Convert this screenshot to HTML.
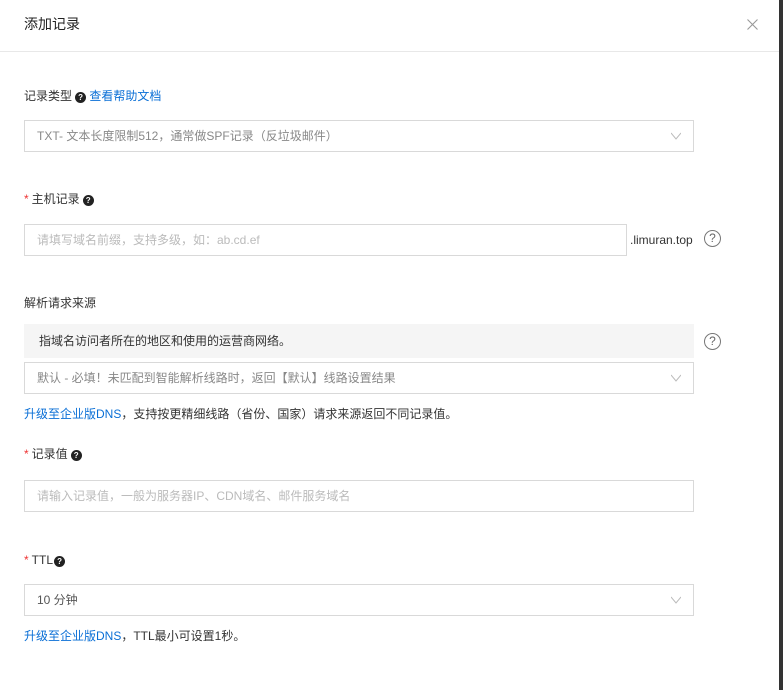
<!DOCTYPE html>
<html><head><meta charset="utf-8"><style>
*{margin:0;padding:0;box-sizing:border-box}
body{width:783px;height:690px;background:#fff;position:relative;overflow:hidden;font-family:"Liberation Sans","Noto Sans CJK SC",sans-serif;font-size:12px;color:#333}
.a{position:absolute;white-space:nowrap}
.lbl{line-height:16px}
.box{position:absolute;border:1px solid #d9d9d9;background:#fff;height:32px;line-height:30px;padding-left:12px;color:#888}
.ph{color:#bbb}
.arr{position:absolute;right:12px;top:10px;width:10px;height:10px}
.q{display:inline-block;width:11px;height:11px;border-radius:50%;background:#222;color:#fff;font-size:8px;line-height:11px;text-align:center;font-weight:bold;vertical-align:-1px;margin-left:3px;position:relative;top:-1px}
.star{color:#e33;margin-right:3px;font-size:12px}
.qc{position:absolute;width:17px;height:17px;border:1px solid #777;border-radius:50%;color:#666;font-size:12px;line-height:15px;text-align:center}
.link{color:#0a6fd6}
</style></head><body>
<div class="a" style="left:24px;top:15px;font-size:14px;line-height:18px;color:#222">添加记录</div>
<svg class="a" style="left:747px;top:19px" width="11" height="11"><path d="M0.5 0.5L10.5 10.5M10.5 0.5L0.5 10.5" stroke="#999" stroke-width="1.1"/></svg>
<div class="a" style="left:0;top:51px;width:779px;height:1px;background:#e8e8e8"></div>
<div class="a" style="left:779px;top:0;width:4px;height:690px;background:#333"></div>

<div class="a lbl" style="left:24px;top:88px">记录类型<span class="q">?</span> <span class="link">查看帮助文档</span></div>
<div class="box" style="left:24px;top:120px;width:670px">TXT- 文本长度限制512，通常做SPF记录（反垃圾邮件）<svg class="arr" viewBox="0 0 10 10"><path d="M0 2L5 8L10 2" fill="none" stroke="#bbb"/></svg></div>

<div class="a lbl" style="left:24px;top:191px"><span class="star">*</span>主机记录<span class="q">?</span></div>
<div class="box ph" style="left:24px;top:224px;width:603px">请填写域名前缀，支持多级，如：ab.cd.ef</div>
<div class="a" style="left:630px;top:232px;line-height:16px;color:#333">.limuran.top</div>
<div class="qc" style="left:704px;top:230px">?</div>

<div class="a lbl" style="left:24px;top:295px">解析请求来源</div>
<div class="a" style="left:24px;top:324px;width:670px;height:34px;background:#f5f5f5;line-height:34px;padding-left:15px;color:#333">指域名访问者所在的地区和使用的运营商网络。</div>
<div class="qc" style="left:704px;top:333px">?</div>
<div class="box" style="left:24px;top:362px;width:670px">默认 - 必填！未匹配到智能解析线路时，返回【默认】线路设置结果<svg class="arr" viewBox="0 0 10 10"><path d="M0 2L5 8L10 2" fill="none" stroke="#bbb"/></svg></div>
<div class="a lbl" style="left:24px;top:406px"><span class="link">升级至企业版DNS</span>，支持按更精细线路（省份、国家）请求来源返回不同记录值。</div>

<div class="a lbl" style="left:24px;top:446px"><span class="star">*</span>记录值<span class="q">?</span></div>
<div class="box ph" style="left:24px;top:480px;width:670px">请输入记录值，一般为服务器IP、CDN域名、邮件服务域名</div>

<div class="a lbl" style="left:24px;top:552px"><span class="star">*</span>TTL<span class="q" style="margin-left:1px">?</span></div>
<div class="box" style="left:24px;top:584px;width:670px;color:#555">10 分钟<svg class="arr" viewBox="0 0 10 10"><path d="M0 2L5 8L10 2" fill="none" stroke="#bbb"/></svg></div>
<div class="a lbl" style="left:24px;top:628px"><span class="link">升级至企业版DNS</span>，TTL最小可设置1秒。</div>
</body></html>
